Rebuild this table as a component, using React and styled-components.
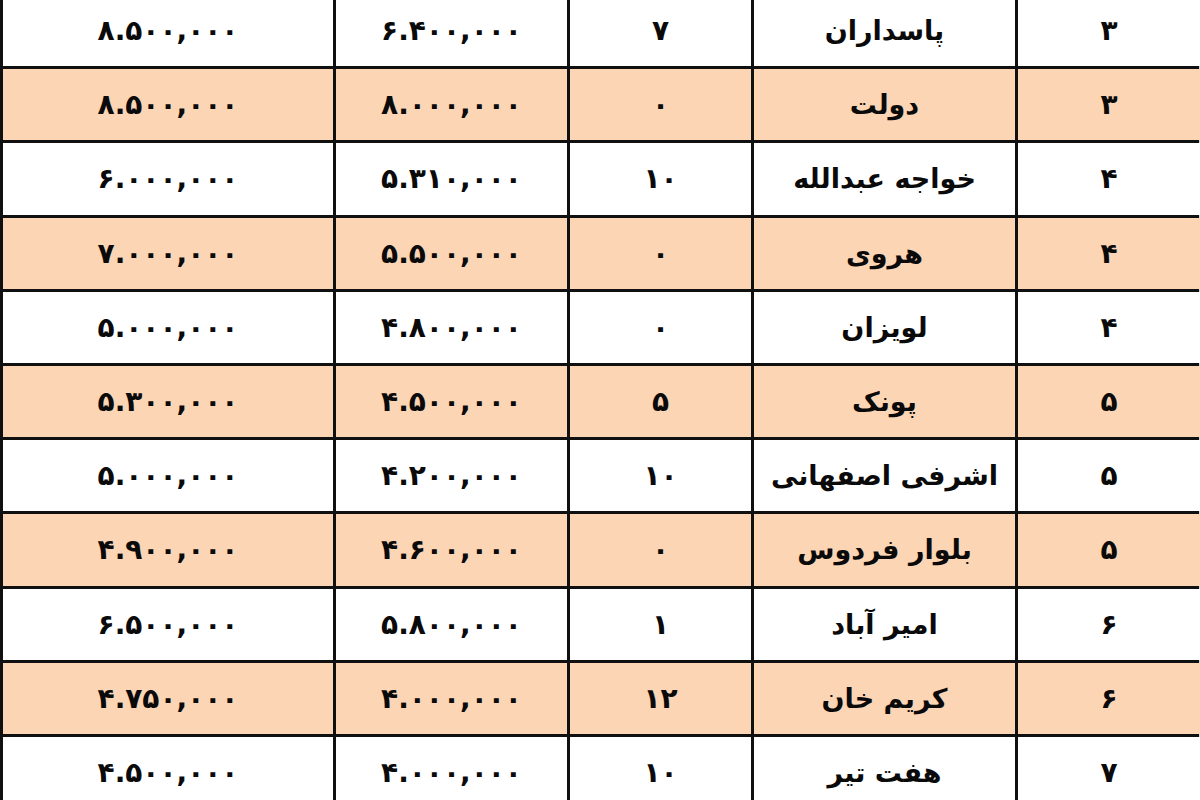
import React from "react";
import styled, { createGlobalStyle } from "styled-components";

const GlobalStyle = createGlobalStyle`
  html, body {
    margin: 0;
    padding: 0;
    background: #ffffff;
    overflow: hidden;
  }
`;

const Sheet = styled.div`
  width: 1200px;
  height: 800px;
  overflow: hidden;
  background: #ffffff;
`;

const Grid = styled.div`
  direction: rtl;
  display: grid;
  grid-template-columns: 182px 261px 181px 231px 330px;
  grid-auto-rows: 71.2px;
  column-gap: 3px;
  row-gap: 3px;
  margin-top: -5px;
  background: #101010;
  border-left: 3px solid #101010;
  box-shadow: inset -1px 0 0 #c9dbe8;
`;

const Cell = styled.div`
  display: flex;
  align-items: center;
  justify-content: center;
  background: ${(p) => (p.$shaded ? "#fcd5b4" : "#ffffff")};
  font-family: "DejaVu Sans", sans-serif;
  font-weight: bold;
  font-size: ${(p) => (p.$num ? "28px" : "27px")};
  color: #0a0a0a;
  white-space: nowrap;
`;

const rows = [
  ["۳", "پاسداران", "۷", "۶.۴۰۰,۰۰۰", "۸.۵۰۰,۰۰۰"],
  ["۳", "دولت", "۰", "۸.۰۰۰,۰۰۰", "۸.۵۰۰,۰۰۰"],
  ["۴", "خواجه عبدالله", "۱۰", "۵.۳۱۰,۰۰۰", "۶.۰۰۰,۰۰۰"],
  ["۴", "هروی", "۰", "۵.۵۰۰,۰۰۰", "۷.۰۰۰,۰۰۰"],
  ["۴", "لویزان", "۰", "۴.۸۰۰,۰۰۰", "۵.۰۰۰,۰۰۰"],
  ["۵", "پونک", "۵", "۴.۵۰۰,۰۰۰", "۵.۳۰۰,۰۰۰"],
  ["۵", "اشرفی اصفهانی", "۱۰", "۴.۲۰۰,۰۰۰", "۵.۰۰۰,۰۰۰"],
  ["۵", "بلوار فردوس", "۰", "۴.۶۰۰,۰۰۰", "۴.۹۰۰,۰۰۰"],
  ["۶", "امیر آباد", "۱", "۵.۸۰۰,۰۰۰", "۶.۵۰۰,۰۰۰"],
  ["۶", "کریم خان", "۱۲", "۴.۰۰۰,۰۰۰", "۴.۷۵۰,۰۰۰"],
  ["۷", "هفت تیر", "۱۰", "۴.۰۰۰,۰۰۰", "۴.۵۰۰,۰۰۰"],
];

export default function App() {
  return (
    <Sheet>
      <GlobalStyle />
      <Grid>
        {rows.map((row, i) =>
          row.map((value, j) => (
            <Cell key={`${i}-${j}`} $shaded={i % 2 === 1} $num={j !== 1}>
              {value}
            </Cell>
          ))
        )}
      </Grid>
    </Sheet>
  );
}
